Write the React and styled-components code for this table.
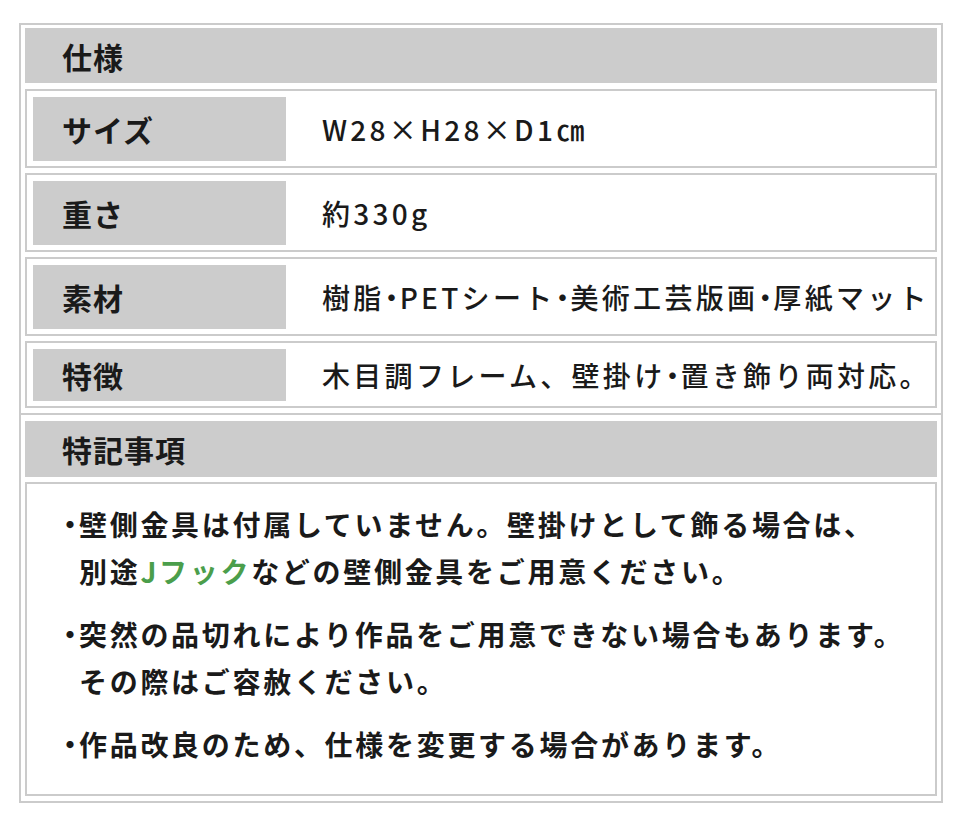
import React from 'react'
import styled, { createGlobalStyle } from 'styled-components'

const GlobalStyle = createGlobalStyle`
  html, body {
    margin: 0;
    padding: 0;
    background: #fff;
  }
  body {
    font-family: "Noto Sans CJK JP", "Noto Sans", sans-serif;
    color: #1a1a1a;
  }
`

const Frame = styled.div`
  margin: 23px 0 0 19px;
  width: 924px;
  box-sizing: border-box;
  border: 2px solid #cbcbcb;
`

const Section = styled.section`
  display: flex;
  flex-direction: column;
  gap: ${p => p.$gap}px;
  padding: ${p => p.$pad};
  border-top: ${p => (p.$divided ? '2px solid #cbcbcb' : 'none')};
`

const Heading = styled.h2`
  margin: 0;
  height: ${p => p.$h}px;
  display: flex;
  align-items: center;
  padding-left: 37px;
  background: #cccccc;
  font-size: 30px;
  font-weight: 700;
  letter-spacing: 1px;
`

const Rows = styled.div`
  display: flex;
  flex-direction: column;
  gap: 5px;
`

const Row = styled.div`
  display: flex;
  align-items: center;
  border: 2px solid #cbcbcb;
  padding: 6px 5px 5px 6px;
`

const Label = styled.div`
  width: 253px;
  height: ${p => p.$h}px;
  flex-shrink: 0;
  display: flex;
  align-items: center;
  padding-left: 29px;
  box-sizing: border-box;
  background: #cccccc;
  font-size: 30px;
  font-weight: 700;
  letter-spacing: 1px;
`

const Value = styled.div`
  padding-left: 36px;
  font-size: 28px;
  font-weight: 500;
  letter-spacing: 3.3px;
  white-space: nowrap;
`

/* narrow middle dot, as the reference font draws it */
const Dot = styled.span`
  font-feature-settings: "halt";
  letter-spacing: 1px;
`

const Notes = styled.div`
  height: 314px;
  box-sizing: border-box;
  border: 2px solid #cbcbcb;
  padding: 17px 0 0 34px;
  display: flex;
  flex-direction: column;
  gap: 16px;
`

const Note = styled.p`
  margin: 0;
  display: flex;
  font-size: 28px;
  font-weight: 700;
  line-height: 47px;
  letter-spacing: 2.7px;
`

const Bullet = styled.span`
  width: 18px;
  flex-shrink: 0;
  display: flex;
  justify-content: center;
  font-feature-settings: "halt";
  letter-spacing: 0;
`

const Green = styled.span`
  color: #4b9e4b;
`

const withDots = text =>
  text.split('・').flatMap((part, i) => (i === 0 ? [part] : [<Dot key={i}>・</Dot>, part]))

const specs = [
  { label: 'サイズ', value: 'W28×H28×D1㎝', h: 64 },
  { label: '重さ', value: '約330g', h: 64 },
  { label: '素材', value: '樹脂・PETシート・美術工芸版画・厚紙マット', h: 64 },
  { label: '特徴', value: '木目調フレーム、壁掛け・置き飾り両対応。', h: 52 },
]

export default function App() {
  return (
    <>
      <GlobalStyle />
      <Frame>
        <Section $gap={6} $pad="3px 4px 5px">
          <Heading $h={55}>仕様</Heading>
          <Rows>
            {specs.map(s => (
              <Row key={s.label}>
                <Label $h={s.h}>{s.label}</Label>
                <Value>{withDots(s.value)}</Value>
              </Row>
            ))}
          </Rows>
        </Section>
        <Section $gap={5} $pad="6px 4px 5px" $divided>
          <Heading $h={56}>特記事項</Heading>
          <Notes>
            <Note>
              <Bullet>・</Bullet>
              <span>
                壁側金具は付属していません。壁掛けとして飾る場合は、
                <br />
                別途<Green>Jフック</Green>などの壁側金具をご用意ください。
              </span>
            </Note>
            <Note>
              <Bullet>・</Bullet>
              <span>
                突然の品切れにより作品をご用意できない場合もあります。
                <br />
                その際はご容赦ください。
              </span>
            </Note>
            <Note>
              <Bullet>・</Bullet>
              <span>作品改良のため、仕様を変更する場合があります。</span>
            </Note>
          </Notes>
        </Section>
      </Frame>
    </>
  )
}
